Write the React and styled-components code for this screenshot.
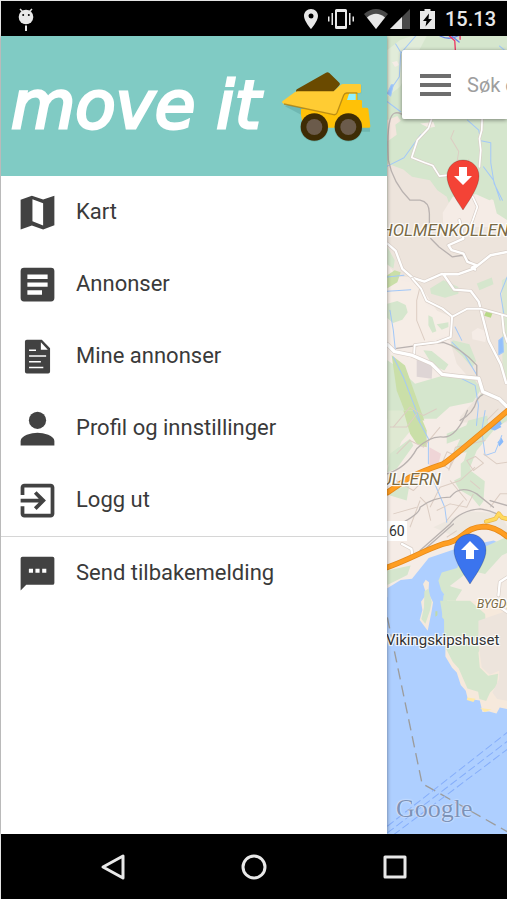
import React from "react";
import styled, { createGlobalStyle } from "styled-components";

const GlobalStyle = createGlobalStyle`
  * { box-sizing: border-box; }
  body {
    margin: 0;
    background: #e4e4e4;
    font-family: Roboto, "Liberation Sans", sans-serif;
    color: #3a3a3a;
  }
`;

const Screen = styled.div`
  display: flex;
  flex-direction: column;
  min-height: 100vh;
  padding: 1px 0 0 1px;
  overflow: hidden;
`;

const StatusBar = styled.header`
  display: flex;
  align-items: center;
  gap: 10px;
  height: 35px;
  padding: 0 11px 0 17px;
  background: #000;
  color: #e8e8e8;
`;

const StatusIcon = styled.svg`
  display: block;
  flex: none;
  fill: currentColor;
`;

const Spacer = styled.div`
  flex: 1;
`;

const Signals = styled.div`
  display: flex;
  gap: 2px;
`;

const Clock = styled.time`
  font-size: 20px;
  font-weight: 500;
  line-height: 24px;
`;

const Main = styled.main`
  flex: 1;
  display: flex;
  min-height: 640px;
`;

const Drawer = styled.aside`
  position: relative;
  z-index: 2;
  flex: 0 1 386px;
  background: #fff;
  box-shadow: 0 0 4px rgba(0, 0, 0, 0.45);
`;

const Brand = styled.div`
  display: flex;
  align-items: center;
  justify-content: space-between;
  height: 140px;
  padding: 0 15px 0 10px;
  background: #80cbc4;
`;

const Wordmark = styled.h1`
  margin: 0;
  color: #fff;
  font-family: "DejaVu Sans", sans-serif;
  font-size: 66px;
  font-style: italic;
  font-weight: 400;
  line-height: 80px;
  white-space: nowrap;
  -webkit-text-stroke: 3px #fff;
  stroke-linejoin: round;
`;

const Menu = styled.ul`
  margin: 0;
  padding: 0;
  list-style: none;
  border-bottom: ${(p) => (p.$divided ? "1px solid #d6d6d6" : "0")};
`;

const MenuLink = styled.a`
  display: flex;
  align-items: center;
  gap: 16px;
  height: 72px;
  padding: 0 14px;
  color: inherit;
  font-size: 22px;
  line-height: 28px;
  text-decoration: none;
`;

const MenuIcon = styled.svg`
  flex: none;
  width: 45px;
  height: 45px;
  fill: #424242;
`;

const MapPane = styled.section`
  position: relative;
  flex: 1 0 120px;
  overflow: hidden;
  background: #aecfff;
`;

const MapArt = styled.svg`
  position: absolute;
  inset: 0;
  width: 100%;
  height: 100%;
`;

const SearchBar = styled.form`
  position: relative;
  display: flex;
  align-items: center;
  gap: 16px;
  height: 69px;
  margin: 14px 0 0 15px;
  padding-left: 18px;
  background: #fff;
  border-radius: 2px 0 0 2px;
  box-shadow: 0 1px 4px rgba(0, 0, 0, 0.45);
`;

const MenuButton = styled.button`
  flex: none;
  display: flex;
  padding: 0;
  border: 0;
  background: none;
`;

const SearchInput = styled.input`
  flex: 1;
  min-width: 0;
  padding: 0;
  border: 0;
  outline: 0;
  background: none;
  font: 20px/28px Roboto, "Liberation Sans", sans-serif;
  &::placeholder { color: #9e9e9e; opacity: 1; }
`;

const PlaceLabel = styled.span`
  position: absolute;
  left: ${(p) => p.$x}px;
  top: ${(p) => p.$y}px;
  color: ${(p) => p.$color || "#7a6a45"};
  font-size: ${(p) => p.$size}px;
  font-style: ${(p) => (p.$upright ? "normal" : "italic")};
  line-height: 20px;
  white-space: nowrap;
  text-shadow: 1px 1px 1px #fff, -1px -1px 1px #fff, 1px -1px 1px #fff, -1px 1px 1px #fff;
`;

const RoadBadge = styled(PlaceLabel)`
  padding: 0 2px;
  background: #fff;
`;

const Attribution = styled(PlaceLabel)`
  font-family: "Liberation Serif", serif;
  line-height: 32px;
  text-shadow: 0 0 2px #e6f0ff, 0 0 1px #fff;
`;

const Pin = styled.svg`
  position: absolute;
  left: ${(p) => p.$x}px;
  top: ${(p) => p.$y}px;
  width: 34px;
  height: 52px;
`;

const NavBar = styled.nav`
  display: flex;
  justify-content: center;
  height: 65px;
  background: #000;
`;

const NavButton = styled.button`
  flex: 0 1 141px;
  display: flex;
  align-items: center;
  justify-content: center;
  padding: 0;
  border: 0;
  background: none;
`;

const icons = {
  map: <path fillRule="evenodd" d="M3 5.2 9 3l6 2.1L21 3v15.8L15 21l-6-2.1L3 21zM9.3 4.9v11.7l5.7 2.3V7z" />,
  list: (
    <path
      fillRule="evenodd"
      d="M4.8 3h14.4Q21 3 21 4.8v14.4q0 1.8-1.8 1.8H4.8Q3 21 3 19.2V4.8Q3 3 4.8 3zM6.6 6.6v2.5h10.8V6.6zM6.6 10.9v2.3h10.8v-2.3zM6.6 15v2.4h7.8V15z"
    />
  ),
  doc: (
    <path
      fillRule="evenodd"
      d="M6.3 3h8l4.4 4.6V20q0 1-1 1H6.3q-1 0-1-1V4q0-1 1-1zM13.8 4.4v4h3.7zM7.5 8.3v.7h3.7v-.7zM7.5 11.3v.8h9.1v-.8zM7.5 14.4v.8h6.3v-.8zM7.5 17.4v.8h7.6v-.8z"
    />
  ),
  person: (
    <>
      <circle cx="12" cy="7.6" r="4.6" />
      <path d="M3 21v-2.3c0-2.9 5.8-4.4 9-4.4s9 1.5 9 4.4V21z" />
    </>
  ),
  exit: (
    <path d="M10.09 15.59 11.5 17l5-5-5-5-1.41 1.41L12.67 11H3v2h9.67zM19 3H5c-1.11 0-2 .9-2 2v4h2V5h14v14H5v-4H3v4c0 1.1.89 2 2 2h14c1.1 0 2-.9 2-2V5c0-1.1-.9-2-2-2z" />
  ),
  feedback: (
    <path
      fillRule="evenodd"
      d="M4 3h16q1 0 1 1v13q0 1-1 1H6l-3 3V4q0-1 1-1zM7.4 9.4v2.2h2.2V9.4zM10.9 9.4v2.2h2.2V9.4zM14.5 9.4v2.2h2.2V9.4z"
    />
  ),
};

const primaryItems = [
  ["map", "Kart"],
  ["list", "Annonser"],
  ["doc", "Mine annonser"],
  ["person", "Profil og innstillinger"],
  ["exit", "Logg ut"],
];

function MenuItem({ icon, label }) {
  return (
    <li>
      <MenuLink href="#">
        <MenuIcon viewBox="0 0 24 24" aria-hidden="true">{icons[icon]}</MenuIcon>
        {label}
      </MenuLink>
    </li>
  );
}

function Truck() {
  return (
    <svg width="92" height="73" viewBox="30 30 276 219" aria-hidden="true">
      <path d="M45 139 96 166 200 170 212 215H300V208L290 148H276V124H264V100H274V76H216" fill="#4a8f88" opacity=".3" />
      <path d="M93 146h110l22-50h37v24h10q4 0 4 4v19h14q4 0 5 4l6 51q1 5-4 5H100l-7-38z" fill="#ffc107" />
      <path d="M78 93q0-4 4-6l86-49q5-3 10 1l30 29q4 4 0 8l-20 22H78z" fill="#6a4a00" />
      <path d="M37 124 75 96q4-2 8-2h108l20-18q4-4 9-4h49q4 0 4 4v20q0 3-4 3h-39q-6 0-9 7l-20 52q-3 7-10 6L40 131q-6-3-3-7z" fill="#ffcc33" />
      <path d="M42 132 191 164q7 1 10-6l20-52q3-7 9-7h32" fill="none" stroke="#a87c10" strokeWidth="4" opacity=".75" />
      <path d="M237 101h20v19h-26z" fill="#91f1ff" />
      <circle cx="133" cy="203" r="42" fill="#4a8f88" opacity=".3" />
      <circle cx="235" cy="203" r="42" fill="#4a8f88" opacity=".3" />
      <circle cx="133" cy="201" r="41" fill="#3e2c05" />
      <circle cx="235" cy="201" r="41" fill="#3e2c05" />
      <circle cx="133" cy="201" r="24" fill="#6b5b4b" />
      <circle cx="235" cy="201" r="24" fill="#6b5b4b" />
    </svg>
  );
}

const Road = ({ d, w = 8 }) => (
  <>
    <path d={d} stroke="#d9cfc8" strokeWidth={w + 4} />
    <path d={d} stroke="#fff" strokeWidth={w} />
  </>
);

const Highway = ({ d }) => (
  <>
    <path d={d} stroke="#e58a1c" strokeWidth="17" />
    <path d={d} stroke="#ff9e22" strokeWidth="12" />
  </>
);

function MapDrawing() {
  return (
    <MapArt viewBox="0 0 120 797" preserveAspectRatio="xMinYMin slice" aria-hidden="true">
      <g transform="scale(.3333) translate(-21 -18)">
        <g>
          <path d="M0 0H1200V1700H0z" fill="#f5ece6" />
          <path d="M0 0H1200V600H0z" fill="#d5e6cd" />
          <path d="M22 60 60 30 95 18H140L60 170 22 200z" fill="#e1ecd9" />
          <path d="M36 97l15-4 6 12-12 6zM120 280l40-4 5 14-18 4z" fill="#f5ece6" />
          <path d="M22 270l30-12 10 14-16 12 4 30-28 20z" fill="#f3e6de" />
          <path d="M22 400 70 418 96 440 150 450 172 480 200 500 216 545 245 600H22z" fill="#ede4dc" />
          <path d="M188 548l30-48 70-8 40 18 20-8 33 38v60H190z" fill="#f5ece6" />
          <path d="M0 590H381V1125L300 1080 230 1000 200 900 190 870 130 780 90 740H0z" fill="#ede4dc" />
          <path d="M310 490l30 20 10 40 31 20V480H310z" fill="#d5e6cd" />
        </g>
        <g transform="translate(0 570)">
          <path d="M22 130 60 180 108 190 145 260 215 290 206 345 104 372 60 380 22 370z" fill="#f6ede6" />
          <path d="M22 80l22 40-4 25-18-12zM22 250l30-8 25 12 6 22-16 22-28 10-17-15zM150 205l40-25 45 20v20l-40 12-42-12zM290 190l45-18 5 20-42 18zM145 285l12 6 12 42-12 4-12-22zM170 312l35-6v14l-20 8zM218 360l50 12 20 50-12 20-30-35-35-32zM130 390l25 2 50 40-12 18-35-15z" fill="#d5e6cd" />
          <path d="M105 490l85-25 90 10 24 30-25 40-70 14-40 36H22V420l30 20z" fill="#d5e6cd" />
          <path d="M22 165l22-15 18 6-10 30-30 18zM35 405l40 30 58 165H85L50 510z" fill="#cadfa8" />
          <path d="M320 270l18 6-6 16-20-6z" fill="#b8d987" />
          <path d="M110 415l48 10-3 50-45-6z" fill="#ded5d5" />
          <path d="M275 335l18-12 30 12-8 30-38-8z" fill="#f5ece6" />
          <path d="M300 520l81 35v45h-90zM365 180l16-10v320l-14-60z" fill="#dbe7d0" />
          <path d="M240 590l55-65 50-4 36 35v50H240z" fill="#ede4dc" />
        </g>
        <g transform="translate(0 1140)">
          <path d="M22 0h80l-10 60-28 34-20 50-22 20z" fill="#dfe9d2" />
          <path d="M70 0h45l25 60 0 50-30-10-20-30z" fill="#cadfa8" />
          <path d="M265 30l116-30v30L340 60l-50 60-20 50-20-15 10-30-40 5zM200 70l70-30 10 30-80 30zM22 240l66-15-8 45-50-15zM222 210l20-10 0-40 20-18 12 40 40 30-4 60-12 16-25-30-35-20zM30 130l60-45 10 20-50 70-28 10zM22 480l70-15-10 28-60 30z" fill="#d5e6cd" />
          <path d="M148 110l35 20-10 38-25 10z" fill="#efd5d7" />
          <path d="M320 0h61l-56 50z" fill="#ede4dc" />
          <path d="M160 350l100-48 100 6 21 40v20l-60-18-100 26z" fill="#ede7df" />
          <path d="M310 50l40-15 14 15-20 10zM345 38l14-10 6 12-12 14zM352 96l12-14 6 12-12 14z" fill="#87b9fb" />
          <path d="M22 533l40-25 34-4 50-62 95-32 100-20 30 15H381V1000H22z" fill="#aecfff" />
          <path d="M175 510l10-24 46-14 25-40 60-24 65-30V700H245L195 630 210 575 184 540z" fill="#d5e6cd" />
          <path d="M210 525l60-45 45 10 50-55 16-8V700H250L210 620 228 570z" fill="#f3ebe4" />
          <path d="M190 555l20-28 36 10-30 48 10 30-18 30-22-25z" fill="#d5e6cd" />
          <path d="M129 520l8-13 10 8-2 32 14 28-4 25-12 60-24-32 8-30-4-25 16-22z" fill="#f5e9dc" />
          <path d="M133 542l12-8 10 40-5 25-14 40-12-14 8-35z" fill="#d5e6cd" />
        </g>
        <g transform="translate(0 1710)">
          <path d="M200 0H381v325l-22-5-10 18-22-6-20 2-8-35-36-5-6-24-15-17-12-38-14-14-20-34V35z" fill="#f6e9dc" />
          <path d="M200 0h70l45 40 4 60-24 55 4 45 25 25 30-6-4 36-20 20-12 26-20-6-4-22-32-10-26-60-18-20-26-50V40z" fill="#d5e6cd" />
          <path d="M295 60l86-30v270l-30-5-14-20 20-40v-25l-28 12-24-22-10-70z" fill="#ede4dc" />
          <path d="M180 0h20l18 10-10 26-16 20-6-20z" fill="#d5e6cd" />
          <path d="M166 32h6v12l-6 4z" fill="#bfd9a8" />
          <path d="M262 290l24 4-6 10-20-6zM300 322l34 4-20 8z" fill="#ffe9a8" />
        </g>
        <g fill="none" stroke="#a3c8f8" strokeWidth="3" strokeLinecap="round" strokeLinejoin="round">
          <path d="M107 18 62 70 58 140 24 190M22 215l40 30M22 408l50-25 50-70M47 42l15 25M262 270l34 30 6 32 30 6 0 60 10 62 25 50M310 410l30 40 20 60M358 48l15 12" />
          <path d="M22 783l70-5M22 740l50-5M30 840l10 60 6 60M40 980l30 60 50 130M225 890l20 40M215 935l40 40 36 60M235 1040l50 25 10 60-6 60M381 740l-20 50 10 60" />
          <path d="M100 1140l45 85v75M160 1350l34 80 6 45M315 1140l-10 60 10 75 30-10 20-50M160 1350l5-20" />
          <path d="M22 190l12-26 6 0-8 34zM356 930l12-10 2 45-14 8z" fill="#93c0fb" />
        </g>
        <g fill="none" stroke="#dccdc3" strokeWidth="3" strokeLinejoin="round">
          <path d="M222 300l-10 24 24 40-4 24 28 20 6-20M120 770l-10 40 0 60 24 60M206 1320l20-70 90-20M150 1430l30-60 60-20 45-40M50 1270l40-40 40 20 50-60M30 1190l50 0 30-40M185 1300l16-36 26 12-20 40zM260 1290l26-12 24 20-30 22zM120 1400l20 20 12 50M170 1440l40-20 50 10 20-40M200 1470l50-60M90 1490l30-80M310 1270l40 30 31-5M300 1375l-30-25M30 1340l70 40 20-20M210 1350l50 60M230 1500l-30 20" />
          <path d="M320 1170l35-35M40 1190l50-60 40 25 40-20M40 1450l70-20M330 1430l30-40 21 0" />
        </g>
        <g fill="none" stroke="#b9b2b0" strokeWidth="4" strokeLinejoin="round" strokeLinecap="round">
          <path d="M65 252C30 235 20 270 25 390 35 440 60 480 90 510H120Q148 515 148 550V600" />
          <path d="M152 625l25 25 40 30 30-5 30 25M50 954l60-8 80-10Q240 950 290 1005V1035M240 1170q40-20 50-60 20-30 40-15" />
          <path d="M22 1330Q80 1310 110 1255 150 1215 190 1220 230 1220 262 1140M60 1480Q120 1450 120 1430 160 1400 210 1400 240 1360 290 1390L340 1430M120 1560l90-80Q240 1440 300 1435 330 1440 350 1450M130 1560l90-80M330 1410l51 15" />
        </g>
        <g fill="none" strokeLinejoin="round" strokeLinecap="round">
          <Road w={5} d="M155 265 145 295 112 330 95 382 135 398 158 406 178 438 230 432M306 265 305 300 298 325 302 360 298 410M278 500l14 30-14 40-12 30" />
          <Road w={7} d="M238 570 250 625 205 645 215 660 250 670 262 695 290 705 275 712 285 718M22 640l25 22 20 54 30 26 36 12 50-22 50 0 48-17 50-40 50-10M190 732l32 46 50 4 24 32 10 40 20 78 36 70 16 56" />
          <Road w={6} d="M97 745l26 30 16 36 48 24 30 24 45-24 39 0 80 22M216 860l-4 60-42 16-66 8-2 32M366 855l5 50 10 30" />
          <Road w={10} d="M22 942l22 22 50 10 60 26 32 32 50 6 60 6 12 40 50 22 30 30" />
          <Road w={7} d="M381 1640l-22 14-4 40M66 1540l28 15 4 24M360 1730l21 14" />
          <Highway d="M22 1386 90 1340Q130 1320 190 1300 220 1280 381 1142" />
          <Highway d="M22 1610C90 1586 130 1560 190 1540 250 1532 250 1490 310 1488Q345 1488 381 1518" />
          <path d="M318 1473l28-8 10-16 10 12 15 4" stroke="#e8b84a" strokeWidth="13" />
          <path d="M318 1473l28-8 10-16 10 12 15 4" stroke="#ffd95e" strokeWidth="9" />
          <path d="M180 18q30 15 60-4M215 18l22 18" stroke="#6b84e8" strokeWidth="4" />
          <path d="M208 18l16 14 2 30M240 18l0 10" stroke="#ee3463" strokeWidth="4" />
        </g>
        <g fill="none" strokeWidth="3">
          <path d="M22 1760 126 2258 381 2402" stroke="#9c9c9c" strokeWidth="4" strokeDasharray="34 18" />
          <path d="M22 2386 381 2105M22 2406 381 2132M40 2412 381 2156" stroke="#86aefa" strokeDasharray="24 10" />
        </g>
      </g>
    </MapArt>
  );
}

function MapPin({ x, y, color, up }) {
  return (
    <Pin $x={x} $y={y} viewBox="0 0 34 52" aria-hidden="true">
      <path d="M17 1C8 1 1 8 1 17c0 9 6 19 16 34 10-15 16-25 16-34C33 8 26 1 17 1z" fill={color} stroke="#00000030" />
      <path
        d={up ? "M17 8l9 9h-5v9h-8v-9H8z" : "M13 8h8v9h5l-9 9-9-9h5z"}
        fill="#fff"
      />
    </Pin>
  );
}

export default function App() {
  return (
    <>
      <GlobalStyle />
      <Screen>
        <StatusBar>
          <StatusIcon width="16" height="24" viewBox="0 0 16 24" aria-hidden="true">
            <path d="M2 2l3 3M14 2l-3 3" stroke="currentColor" strokeWidth="1.5" />
            <circle cx="8" cy="10" r="7.3" />
            <circle cx="5.2" cy="8" r="1" fill="#000" />
            <circle cx="10.8" cy="8" r="1" fill="#000" />
            <path d="M7 18.5h2V24H7z" />
          </StatusIcon>
          <Spacer />
          <StatusIcon width="14" height="20" viewBox="0 0 14 20" aria-hidden="true">
            <path fillRule="evenodd" d="M7 0C3 0 0 3 0 7c0 5 7 13 7 13s7-8 7-13c0-4-3-7-7-7zm0 4.5a2.5 2.5 0 1 1 0 5 2.5 2.5 0 0 1 0-5z" />
          </StatusIcon>
          <StatusIcon width="26" height="20" viewBox="0 0 26 20" aria-hidden="true">
            <path fillRule="evenodd" d="M8.5 0h9Q19 0 19 1.5v17q0 1.5-1.5 1.5h-9Q7 20 7 18.5v-17Q7 0 8.5 0zM9 3v14h8V3zM3.5 4H5v12H3.5zM21 4h1.5v12H21zM0 7.5h1.5v5H0zM24.5 7.5H26v5h-1.5z" />
          </StatusIcon>
          <Signals>
            <StatusIcon width="24" height="20" viewBox="1 0 24 20" aria-hidden="true">
              <path d="M1 5Q13-5 25 5L13 20z" fill="#4a4a4a" />
              <path d="M4 8.5Q13 1 22 8.5L13 20z" />
            </StatusIcon>
            <StatusIcon width="20" height="20" viewBox="0 0 20 20" aria-hidden="true">
              <path d="M20 0v20H0z" fill="#4a4a4a" />
              <path d="M12 8v12H0z" />
            </StatusIcon>
          </Signals>
          <StatusIcon width="15" height="20" viewBox="0 0 15 20" aria-hidden="true">
            <path d="M4.5 0h6v2H15v18H0V2h4.5z" />
            <path d="M9 4.5 3 12h3.5L5.5 17.5 12 10H8.5z" fill="#000" />
          </StatusIcon>
          <Clock>15.13</Clock>
        </StatusBar>

        <Main>
          <Drawer>
            <Brand>
              <Wordmark>move it</Wordmark>
              <Truck />
            </Brand>
            <Menu $divided>
              {primaryItems.map(([icon, label]) => (
                <MenuItem key={icon} icon={icon} label={label} />
              ))}
            </Menu>
            <Menu>
              <MenuItem icon="feedback" label="Send tilbakemelding" />
            </Menu>
          </Drawer>

          <MapPane aria-label="Kart">
            <MapDrawing />
            <PlaceLabel $x={-6} $y={184} $size={17}>HOLMENKOLLEN</PlaceLabel>
            <PlaceLabel $x={-6} $y={433} $size={17}>ULLERN</PlaceLabel>
            <RoadBadge $x={0} $y={485} $size={14} $color="#333" $upright>60</RoadBadge>
            <PlaceLabel $x={90} $y={558} $size={12}>BYGDØY</PlaceLabel>
            <PlaceLabel $x={-1} $y={594} $size={15} $color="#333" $upright>Vikingskipshuset</PlaceLabel>
            <Attribution $x={9} $y={757} $size={26} $color="#7d93b8" $upright>Google</Attribution>
            <MapPin x={59} y={123} color="#f44336" />
            <MapPin x={66} y={497} color="#3b74ee" up />
            <SearchBar>
              <MenuButton type="button" aria-label="Meny">
                <svg width="31" height="22" viewBox="0 0 31 22" aria-hidden="true">
                  <path d="M0 0h31v4H0zM0 9h31v4H0zM0 18h31v4H0z" fill="#6e6e6e" />
                </svg>
              </MenuButton>
              <SearchInput type="text" aria-label="Søk" placeholder="Søk etter" />
            </SearchBar>
          </MapPane>
        </Main>

        <NavBar>
          <NavButton type="button" aria-label="Tilbake">
            <svg width="26" height="28" viewBox="0 0 26 28" fill="none" stroke="#e8e8e8" strokeWidth="3" strokeLinejoin="round">
              <path d="M23 3v22L3 14z" />
            </svg>
          </NavButton>
          <NavButton type="button" aria-label="Hjem">
            <svg width="26" height="26" viewBox="0 0 26 26" fill="none" stroke="#e8e8e8" strokeWidth="3">
              <circle cx="13" cy="13" r="11" />
            </svg>
          </NavButton>
          <NavButton type="button" aria-label="Oversikt">
            <svg width="24" height="24" viewBox="0 0 24 24" fill="none" stroke="#e8e8e8" strokeWidth="3" strokeLinejoin="round">
              <path d="M2 2h20v20H2z" />
            </svg>
          </NavButton>
        </NavBar>
      </Screen>
    </>
  );
}
